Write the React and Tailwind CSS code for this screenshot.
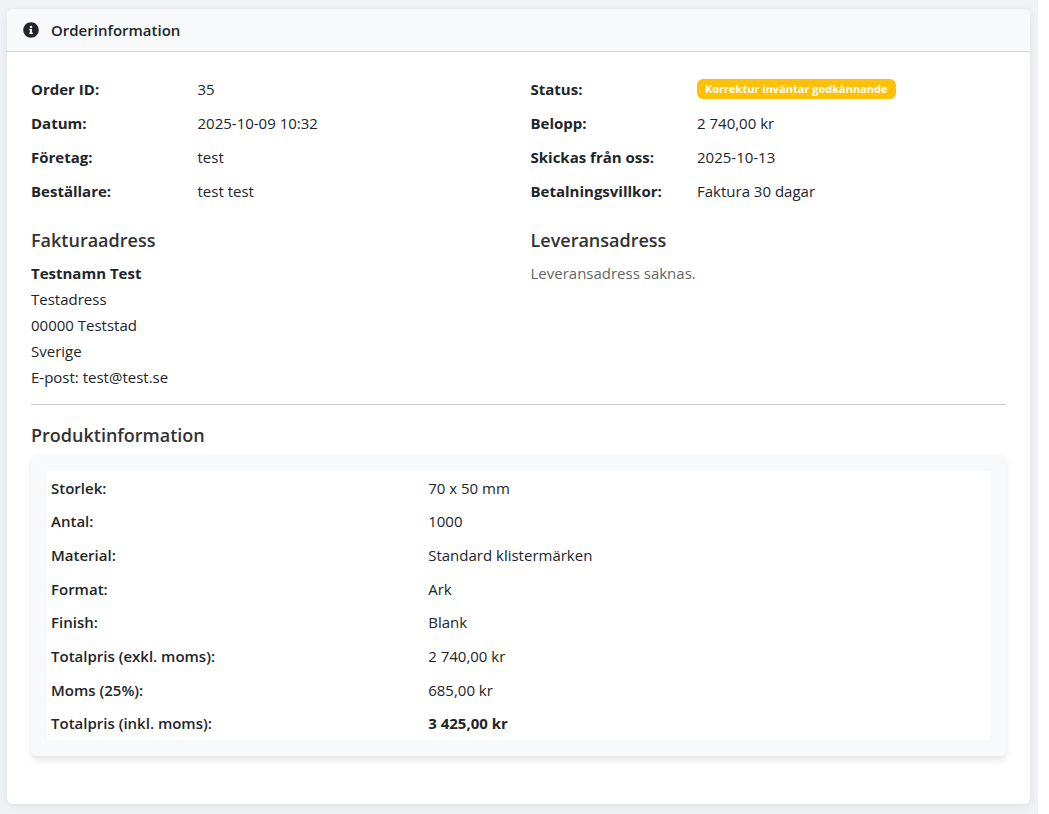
import React from 'react';
import { FaInfoCircle } from 'react-icons/fa';

const orderFields = [
  { label: 'Order ID:', value: '35' },
  { label: 'Datum:', value: '2025-10-09 10:32' },
  { label: 'Företag:', value: 'test' },
  { label: 'Beställare:', value: 'test test' },
];

const statusFields = [
  { label: 'Status:', value: 'Korrektur inväntar godkännande', badge: true },
  { label: 'Belopp:', value: '2 740,00 kr' },
  { label: 'Skickas från oss:', value: '2025-10-13' },
  { label: 'Betalningsvillkor:', value: 'Faktura 30 dagar' },
];

const productRows = [
  { label: 'Storlek:', value: '70 x 50 mm' },
  { label: 'Antal:', value: '1000' },
  { label: 'Material:', value: 'Standard klistermärken' },
  { label: 'Format:', value: 'Ark' },
  { label: 'Finish:', value: 'Blank' },
  { label: 'Totalpris (exkl. moms):', value: '2 740,00 kr' },
  { label: 'Moms (25%):', value: '685,00 kr' },
  { label: 'Totalpris (inkl. moms):', value: '3 425,00 kr', total: true },
];

const FieldList = ({ fields }) => (
  <dl>
    {fields.map(f => (
      <div key={f.label} className="grid grid-cols-3 pb-2">
        <dt className="font-bold">{f.label}</dt>
        <dd className="col-span-2 flex items-center">
          {f.badge ? (
            <span className="rounded-md bg-[#ffc107] px-2 text-[11px] leading-5 font-bold text-white">{f.value}</span>
          ) : (
            f.value
          )}
        </dd>
      </div>
    ))}
  </dl>
);

const SectionTitle = ({ children }) => (
  <h2 className="mb-2 text-lg leading-6 font-semibold text-[#333333]">{children}</h2>
);

const App = () => {
  return (
    <div className="min-h-screen bg-white pr-[11px]">
      <main className="min-h-screen bg-[#f0f2f5] pt-[9px] pr-2 pb-[10px] pl-[7px] font-['Open_Sans',sans-serif] text-[15px] leading-[26px] text-[#212529]">
        <section className="rounded-md bg-white shadow-[0_2px_8px_rgba(0,0,0,0.08)]">
          <header className="flex items-center gap-3 rounded-t-md border-b border-[#d5d8db] bg-[#f8f9fa] px-4 py-2">
            <FaInfoCircle className="size-4" />
            <h1 className="font-semibold">Orderinformation</h1>
          </header>

          <div className="px-6 pt-6 pb-12">
            <div className="-mr-6 grid grid-cols-2">
              <FieldList fields={orderFields} />
              <FieldList fields={statusFields} />
            </div>

            <div className="-mr-6 mt-4 grid grid-cols-2">
              <div>
                <SectionTitle>Fakturaadress</SectionTitle>
                <address className="not-italic">
                  <strong className="font-bold">Testnamn Test</strong><br />
                  Testadress<br />
                  00000 Teststad<br />
                  Sverige<br />
                  E-post: test@test.se
                </address>
              </div>
              <div>
                <SectionTitle>Leveransadress</SectionTitle>
                <p className="text-[#646668]">Leveransadress saknas.</p>
              </div>
            </div>

            <hr className="mt-[14px] mb-[18px] border-[#c8c9ca]" />

            <SectionTitle>Produktinformation</SectionTitle>
            <div className="rounded-md bg-[#f8f9fa] p-4 shadow-[0_4px_6px_rgba(0,0,0,0.1)]">
              <table className="h-[269px] w-full bg-white">
                <tbody>
                  {productRows.map(row => (
                    <tr key={row.label}>
                      <th scope="row" className="w-2/5 px-1 text-left font-semibold">{row.label}</th>
                      <td className={row.total ? 'px-1 font-bold' : 'px-1'}>{row.value}</td>
                    </tr>
                  ))}
                </tbody>
              </table>
            </div>
          </div>
        </section>
      </main>
    </div>
  );
};

export default App;
